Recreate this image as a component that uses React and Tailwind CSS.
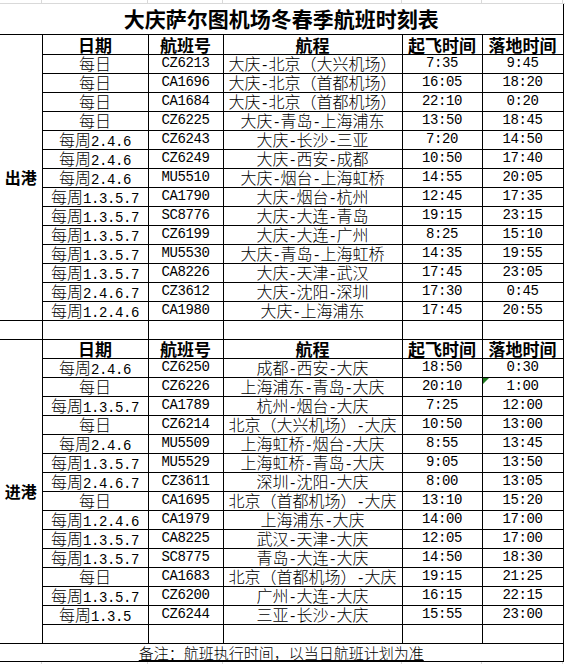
import React from "react";

const departures = [
  ["每日", "CZ6213", "大庆-北京（大兴机场）", "7:35", "9:45"],
  ["每日", "CA1696", "大庆-北京（首都机场）", "16:05", "18:20"],
  ["每日", "CA1684", "大庆-北京（首都机场）", "22:10", "0:20"],
  ["每日", "CZ6225", "大庆-青岛-上海浦东", "13:50", "18:45"],
  ["每周2.4.6", "CZ6243", "大庆-长沙-三亚", "7:20", "14:50"],
  ["每周2.4.6", "CZ6249", "大庆-西安-成都", "10:50", "17:40"],
  ["每周2.4.6", "MU5510", "大庆-烟台-上海虹桥", "14:55", "20:05"],
  ["每周1.3.5.7", "CA1790", "大庆-烟台-杭州", "12:45", "17:35"],
  ["每周1.3.5.7", "SC8776", "大庆-大连-青岛", "19:15", "23:15"],
  ["每周1.3.5.7", "CZ6199", "大庆-大连-广州", "8:25", "15:10"],
  ["每周1.3.5.7", "MU5530", "大庆-青岛-上海虹桥", "14:35", "19:55"],
  ["每周1.3.5.7", "CA8226", "大庆-天津-武汉", "17:45", "23:05"],
  ["每周2.4.6.7", "CZ3612", "大庆-沈阳-深圳", "17:30", "0:45"],
  ["每周1.2.4.6", "CA1980", "大庆-上海浦东", "17:45", "20:55"],
];

const arrivals = [
  ["每周2.4.6", "CZ6250", "成都-西安-大庆", "18:50", "0:30"],
  ["每日", "CZ6226", "上海浦东-青岛-大庆", "20:10", "1:00"],
  ["每周1.3.5.7", "CA1789", "杭州-烟台-大庆", "7:25", "12:00"],
  ["每日", "CZ6214", "北京（大兴机场）-大庆", "10:50", "13:00"],
  ["每周2.4.6", "MU5509", "上海虹桥-烟台-大庆", "8:55", "13:45"],
  ["每周1.3.5.7", "MU5529", "上海虹桥-青岛-大庆", "9:05", "13:50"],
  ["每周2.4.6.7", "CZ3611", "深圳-沈阳-大庆", "8:00", "13:05"],
  ["每日", "CA1695", "北京（首都机场）-大庆", "13:10", "15:20"],
  ["每周1.2.4.6", "CA1979", "上海浦东-大庆", "14:00", "17:00"],
  ["每周1.3.5.7", "CA8225", "武汉-天津-大庆", "12:05", "17:00"],
  ["每周1.3.5.7", "SC8775", "青岛-大连-大庆", "14:50", "18:30"],
  ["每日", "CA1683", "北京（首都机场）-大庆", "19:15", "21:25"],
  ["每周1.3.5.7", "CZ6200", "广州-大连-大庆", "16:15", "22:15"],
  ["每周1.3.5", "CZ6244", "三亚-长沙-大庆", "15:55", "23:00"],
];

const headers = ["日期", "航班号", "航程", "起飞时间", "落地时间"];

// ascii runs get a half-width mono face, like the sheet's song font
const Mixed = ({ text }) =>
  text
    .split(/([\x20-\x7E]+)/)
    .filter(Boolean)
    .map((part, i) =>
      /^[\x20-\x7E]+$/.test(part) ? (
        <span
          key={i}
          className="font-['Liberation_Mono',monospace] text-[14px] tracking-[-0.4px]"
        >
          {part}
        </span>
      ) : (
        <span key={i}>{part}</span>
      )
    );

const cell = "border border-black p-0 text-center align-middle leading-none whitespace-nowrap";

const Sliver = () => (
  <div className="flex h-[3px]">
    {[42, 106, 75, 179, 80, 81].map((w, i) => (
      <div key={i} style={{ width: w }} className="shrink-0 border-r border-[#d9d9d9]" />
    ))}
  </div>
);

const HeaderRow = () => (
  <>
    {headers.map((h) => (
      <td key={h} className={`${cell} font-bold text-[17px]`}>
        <div className="flex h-[17px] items-center justify-center">{h}</div>
      </td>
    ))}
  </>
);

const DataCells = ({ row, flag }) =>
  row.map((v, i) => (
    <td key={i} className={`${cell} font-light text-[16px] ${flag && i === 4 ? "relative" : ""}`}>
      {flag && i === 4 && (
        <svg className="absolute left-0 top-0" width="6" height="6">
          <polygon points="0,0 6,0 0,6" fill="#1f7a1f" />
        </svg>
      )}
      <div className="flex h-[17px] items-baseline justify-center leading-[17px]">
        <Mixed text={v} />
      </div>
    </td>
  ));

export default function App() {
  return (
    <div className="w-[565px] h-[664px] bg-white overflow-hidden text-black font-['Noto_Sans_CJK_SC',sans-serif]">
      <div className="border-b border-[#d9d9d9]">
        <Sliver />
      </div>
      <table className="table-fixed border-collapse w-[563px]">
        <colgroup>
          <col className="w-[42px]" />
          <col className="w-[106px]" />
          <col className="w-[75px]" />
          <col className="w-[179px]" />
          <col className="w-[80px]" />
          <col className="w-[81px]" />
        </colgroup>
        <tbody>
          <tr className="h-[30px]">
            <td colSpan={6} className={`${cell} border-t-0 border-l-0 font-bold text-[21px]`}>
              大庆萨尔图机场冬春季航班时刻表
            </td>
          </tr>
          <tr className="h-[20px]">
            <td rowSpan={15} className={`${cell} border-l-0 font-bold text-[16px]`}>
              出港
            </td>
            <HeaderRow />
          </tr>
          {departures.map((r) => (
            <tr key={r[1]} className="h-[19px]">
              <DataCells row={r} />
            </tr>
          ))}
          <tr className="h-[19px]">
            <td className={`${cell} border-l-0`} />
            <td className={cell} />
            <td className={cell} />
            <td className={cell} />
            <td className={cell} />
            <td className={cell} />
          </tr>
          <tr className="h-[19px]">
            <td rowSpan={16} className={`${cell} border-l-0 font-bold text-[16px]`}>
              进港
            </td>
            <HeaderRow />
          </tr>
          {arrivals.map((r, idx) => (
            <tr key={r[1]} className="h-[19px]">
              <DataCells row={r} flag={idx === 1} />
            </tr>
          ))}
          <tr className="h-[19px]">
            <td className={cell} />
            <td className={cell} />
            <td className={cell} />
            <td className={cell} />
            <td className={cell} />
          </tr>
          <tr className="h-[18px]">
            <td colSpan={6} className={`${cell} border-l-0 text-[15px] font-light`}>
              <div className="flex h-[16px] items-center justify-center">
                <span className="underline decoration-1 underline-offset-[1px]">
                  备注：航班执行时间，以当日航班计划为准
                </span>
              </div>
            </td>
          </tr>
        </tbody>
      </table>
      <Sliver />
    </div>
  );
}
